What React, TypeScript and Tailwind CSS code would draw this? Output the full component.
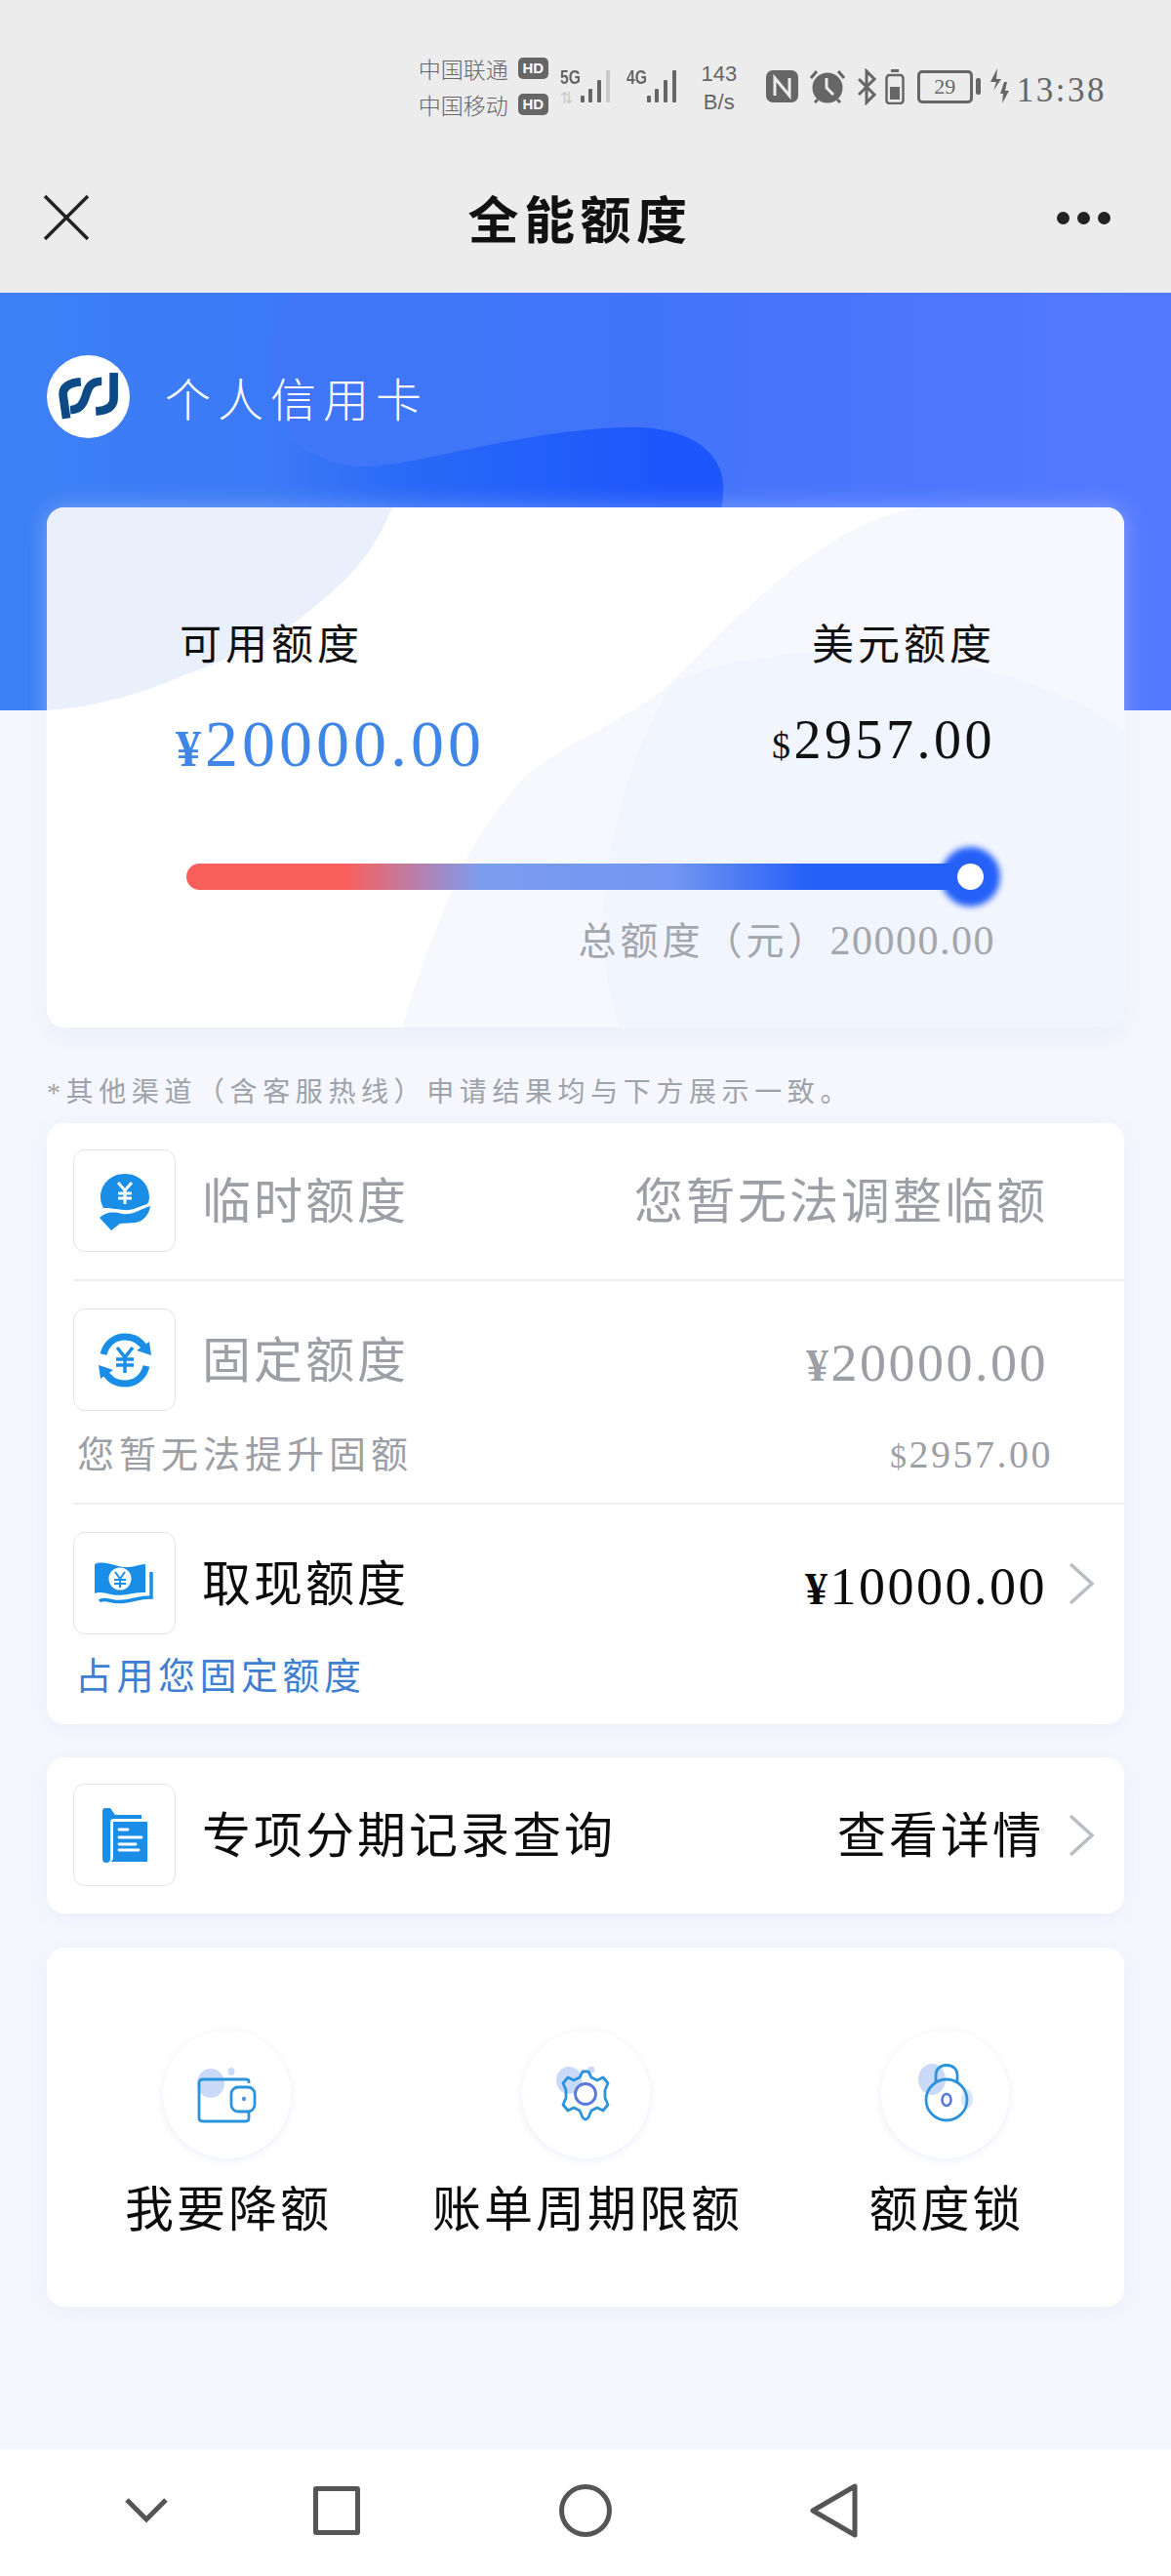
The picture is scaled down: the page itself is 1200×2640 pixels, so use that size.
import React from "react";

const serif = "font-['Liberation_Serif','Noto_Sans_CJK_SC',serif]";

function Chevron() {
  return (
    <svg width="28" height="46" viewBox="0 0 28 46" fill="none" stroke="#b9bdc4" strokeWidth="3.5">
      <path d="M3 3 L25 23 L3 43" />
    </svg>
  );
}

function IconBox({ children }: { children: React.ReactNode }) {
  return (
    <div className="w-[105px] h-[105px] shrink-0 rounded-[12px] border border-[#e3e4e7] bg-white flex items-center justify-center">
      {children}
    </div>
  );
}

function HandIcon() {
  return (
    <svg width="54" height="60" viewBox="0 0 54 60">
      <path d="M27 2 C42 2 52 13 52 26 C52 29 51 31 50 33 C42 35 35 40 26 39 C18 38 10 37 5 37 C3 33 2 30 2 26 C2 13 12 2 27 2 Z" fill="#1a8ee6" />
      <path d="M20 11 L27 19 L34 11 M27 19 V33 M20 22 H34 M20 27 H34" stroke="#fff" strokeWidth="3" fill="none" />
      <path d="M1 47 C6 42 14 40 24 43 C34 45 43 38 53 35 C52 43 47 50 38 52 L22 53 L13 60 Z" fill="#1a8ee6" />
    </svg>
  );
}

function CycleIcon() {
  return (
    <svg width="56" height="56" viewBox="0 0 56 56" fill="none">
      <path d="M6 22 C9 10 18 4 28 4 C38 4 45 9 49 17" stroke="#1a8ee6" strokeWidth="7" />
      <path d="M50 34 C47 46 38 52 28 52 C18 52 11 47 7 39" stroke="#1a8ee6" strokeWidth="7" />
      <path d="M40 18 L55 23 L53 9 Z M16 38 L1 33 L3 47 Z" fill="#1a8ee6" />
      <path d="M20 15 L28 25 L36 15 M28 25 V41 M19 27 H37 M19 33 H37" stroke="#1a8ee6" strokeWidth="3.5" />
    </svg>
  );
}

function MoneyIcon() {
  return (
    <svg width="64" height="46" viewBox="0 0 64 46">
      <path d="M1 3 C12 -2 24 7 36 6 C42 6 47 3 53 3 V32 C40 31 30 37 18 34 C10 32 5 31 1 33 Z" fill="#1a8ee6" />
      <circle cx="27" cy="18" r="11.5" fill="#fff" />
      <path d="M22 11 L27 18 L32 11 M27 18 V27 M21 19 H33 M21 23 H33" stroke="#1a8ee6" strokeWidth="2" fill="none" />
      <path d="M59 11 V37 C46 36 34 44 20 41 C14 40 9 38 6 41" stroke="#1a8ee6" strokeWidth="3.5" fill="none" />
    </svg>
  );
}

function FolderIcon() {
  return (
    <svg width="46" height="56" viewBox="0 0 46 56">
      <path d="M0 3 Q0 0 3 0 H8 L13 7 H40 V11 H12 Q8 11 8 15 V52 Q8 56 4 56 Q0 56 0 52 Z" fill="#1a8ee6" />
      <path d="M11 14 H46 V55 H8 Q11 54 11 50 Z" fill="#1a8ee6" />
      <path d="M17 22 H26 M17 30 H40 M17 37 H34 M17 43 H37" stroke="#fff" strokeWidth="2.8" strokeLinecap="round" />
    </svg>
  );
}

function WalletIcon() {
  return (
    <svg width="64" height="58" viewBox="0 0 64 58" fill="none" className="ml-[2px] mt-[2px]">
      <ellipse cx="15" cy="16" rx="14" ry="15" fill="#c9d9f8" />
      <ellipse cx="36" cy="4" rx="3.5" ry="4" fill="#c9d9f8" />
      <path d="M54 16 V14 Q54 12 51 12 H7 Q3 12 3 16 V52 Q3 55 7 55 H51 Q54 55 54 52 V46" stroke="#2b93dc" strokeWidth="2.8" />
      <rect x="36" y="20" width="24" height="25" rx="7" stroke="#2b93dc" strokeWidth="2.8" fill="#fff" />
      <circle cx="49" cy="32" r="2.2" fill="#5a8fdc" />
    </svg>
  );
}

function GearIcon() {
  return (
    <svg width="60" height="58" viewBox="0 0 60 58" fill="none">
      <ellipse cx="13" cy="14" rx="13" ry="14" fill="#c9d9f8" />
      <circle cx="36" cy="3" r="3.5" fill="#c9d9f8" />
      <path
        d="M27 5 H33 L36 11 L42 14 L48 11 L53 17 L50 24 V32 L53 39 L48 45 L42 42 L36 45 L33 52 Q30 56 27 52 L24 45 L18 42 L12 45 L7 39 L10 32 V24 L7 17 L12 11 L18 14 L24 11 Z"
        stroke="#2b93dc"
        strokeWidth="2.8"
        strokeLinejoin="round"
      />
      <circle cx="30" cy="28" r="10.5" stroke="#5a78d8" strokeWidth="2.8" />
    </svg>
  );
}

function LockIcon() {
  return (
    <svg width="58" height="60" viewBox="0 0 58 60" fill="none" className="ml-[4px] mb-[4px]">
      <ellipse cx="14" cy="16" rx="14" ry="16" fill="#c9d9f8" />
      <ellipse cx="50" cy="36" rx="6" ry="10" fill="#dbe6fb" />
      <path d="M18 20 V12 C18 5 23 1.5 29 1.5 C35 1.5 40 5 40 12 V20" stroke="#2b93dc" strokeWidth="2.8" />
      <circle cx="29" cy="37" r="21" stroke="#2b93dc" strokeWidth="2.8" />
      <ellipse cx="29" cy="37" rx="4.5" ry="6" stroke="#5a78d8" strokeWidth="2.6" />
    </svg>
  );
}

function Logo() {
  return (
    <div className="w-[85px] h-[85px] rounded-full bg-white shrink-0">
      <svg width="85" height="85" viewBox="0 0 254 254" fill="none" stroke="#0e4a86" strokeWidth="26">
        <path d="M60 194 L50 125 C46 97 70 84 104 82" />
        <path d="M168 80 C130 80 125 105 118 128 C110 152 100 166 72 168" />
        <path d="M205 54 L205 130 C205 158 185 170 150 172" />
      </svg>
    </div>
  );
}

function Signal({ dim }: { dim?: boolean }) {
  return (
    <svg width="36" height="36" viewBox="0 0 36 36" fill="#666">
      <rect x="1" y="28" width="4" height="7" rx="1" />
      <rect x="9" y="21" width="4" height="14" rx="1" />
      <rect x="18" y="12" width="4" height="23" rx="1" />
      <rect x="27" y="2" width="4" height="33" rx="1" fill={dim ? "#c9c9c9" : "#666"} />
    </svg>
  );
}

function StatusBar() {
  return (
    <div className="h-[160px] pt-[58px] pr-[66px] flex justify-end items-start text-[#666]">
      <div className="flex flex-col gap-[13px] mr-[12px] font-['Noto_Sans_CJK_SC',sans-serif] text-[23px] leading-[24px] font-light">
        {["中国联通", "中国移动"].map((name) => (
          <div key={name} className="flex items-center gap-[10px]">
            <span>{name}</span>
            <span className="w-[31px] h-[22px] rounded-[5px] bg-[#666] text-white text-[15px] leading-[22px] font-bold text-center font-['Liberation_Sans',sans-serif]">
              HD
            </span>
          </div>
        ))}
      </div>
      <div className="relative w-[56px] h-[50px] mt-[10px] mr-[12px]">
        <span className="absolute left-0 top-0 text-[21px] leading-[22px] font-bold font-['Liberation_Sans',sans-serif] scale-x-75 origin-left">5G</span>
        <div className="absolute right-0 top-[2px]"><Signal dim /></div>
        <span className="absolute left-0 top-[24px] text-[16px] leading-[16px] text-[#c9c9c9]">⇅</span>
      </div>
      <div className="relative w-[56px] h-[50px] mt-[10px] mr-[18px]">
        <span className="absolute left-0 top-0 text-[21px] leading-[22px] font-bold font-['Liberation_Sans',sans-serif] scale-x-75 origin-left">4G</span>
        <div className="absolute right-0 top-[2px]"><Signal /></div>
      </div>
      <div className="w-[42px] mr-[27px] mt-[3px] text-center font-['Liberation_Sans',sans-serif] text-[22px] leading-[29px] text-[#666]">
        143
        <br />
        B/s
      </div>
      <svg width="34" height="34" viewBox="0 0 34 34" className="mt-[14px] mr-[10px]">
        <rect width="33" height="33" rx="7" fill="#666" />
        <path d="M9 26 V8 L24 26 V8" stroke="#ececec" strokeWidth="3" fill="none" />
      </svg>
      <svg width="38" height="36" viewBox="0 0 38 36" className="mt-[13px] mr-[12px]">
        <circle cx="19" cy="19" r="15.5" fill="#666" />
        <path d="M18 9 V19 L25 26" stroke="#ececec" strokeWidth="3" fill="none" />
        <path d="M2 9 L8 2 M36 9 L30 2 M6 34 L9 31 M32 34 L29 31" stroke="#666" strokeWidth="3" />
      </svg>
      <svg width="20" height="38" viewBox="0 0 20 38" fill="none" stroke="#666" strokeWidth="3" className="mt-[12px] mr-[8px]">
        <path d="M1 11 L17 27 L9 35 V3 L17 11 L1 27" />
      </svg>
      <svg width="20" height="36" viewBox="0 0 20 36" className="mt-[13px] mr-[13px]" fill="none">
        <rect x="6" y="0" width="8" height="3" fill="#666" />
        <rect x="1.5" y="6" width="17" height="29" rx="3" stroke="#666" strokeWidth="2.5" />
        <rect x="5" y="18" width="10" height="13" fill="#666" />
      </svg>
      <div className="w-[57px] h-[34px] mt-[14px] rounded-[5px] border-[3px] border-[#666] text-center text-[22px] leading-[27px] font-['Liberation_Serif',serif]">
        29
      </div>
      <div className="w-[5px] h-[17px] bg-[#666] rounded-[2px] mt-[22px] ml-[3px] mr-[9px]" />
      <svg width="20" height="36" viewBox="0 0 20 36" fill="#666" className="mt-[12px] mr-[8px]">
        <path d="M8 0 L1 14 H7 L4 23 L12 11 H7 Z M15 14 L11 26 H14 L13 36 L20 23 H16 L18 14 Z" />
      </svg>
      <div className="mt-[15px] text-[35px] leading-[40px] tracking-[2.5px] font-['Liberation_Serif',serif]">13:38</div>
    </div>
  );
}

function NavBar() {
  return (
    <div className="h-[140px] pb-[14px] pl-[44px] pr-[62px] flex items-center justify-between">
      <svg width="48" height="48" viewBox="0 0 48 48" stroke="#222" strokeWidth="3.5">
        <path d="M2 2 L46 46 M46 2 L2 46" />
      </svg>
      <div className="font-['Noto_Sans_CJK_SC',sans-serif] font-bold text-[52px] tracking-[5.5px] leading-[60px] text-[#111] ml-[14px]">全能额度</div>
      <div className="flex gap-[8px]">
        <span className="w-[13px] h-[13px] rounded-full bg-[#222]" />
        <span className="w-[13px] h-[13px] rounded-full bg-[#222]" />
        <span className="w-[13px] h-[13px] rounded-full bg-[#222]" />
      </div>
    </div>
  );
}

function HeroDecor() {
  return (
    <svg className="absolute inset-0 w-full h-full" viewBox="0 0 1200 428" preserveAspectRatio="none">
      <defs>
        <linearGradient id="heroBg" x1="0" y1="0" x2="1" y2="0">
          <stop offset="0" stopColor="#3d80f5" />
          <stop offset="0.25" stopColor="#3b79f6" />
          <stop offset="0.55" stopColor="#4173fa" />
          <stop offset="1" stopColor="#5579fe" />
        </linearGradient>
        <linearGradient id="blob" gradientUnits="userSpaceOnUse" x1="280" y1="0" x2="680" y2="0">
          <stop offset="0" stopColor="#2b6cf6" stopOpacity="0" />
          <stop offset="0.35" stopColor="#2a69f7" />
          <stop offset="1" stopColor="#1d56fb" />
        </linearGradient>
        <linearGradient id="shape" gradientUnits="userSpaceOnUse" x1="270" y1="0" x2="800" y2="0">
          <stop offset="0" stopColor="#4076f7" />
          <stop offset="1" stopColor="#4173fa" stopOpacity="0" />
        </linearGradient>
      </defs>
      <rect width="1200" height="428" fill="url(#heroBg)" />
      <path d="M298 0 C280 30 272 60 275 90 C280 140 325 180 372 178 L800 178 L800 0 Z" fill="url(#shape)" />
      <path d="M372 178 C430 178 540 138 651 138 C700 138 745 160 741 205 C740 225 735 240 730 270 L260 270 L270 120 C290 150 330 178 372 178 Z" fill="url(#blob)" />
    </svg>
  );
}

function CardDecor() {
  return (
    <svg className="absolute inset-0 w-full h-full" viewBox="0 0 1104 533" preserveAspectRatio="none">
      <path d="M0 0 H354 C330 60 295 85 258 115 C225 140 185 155 143 171 C100 190 50 205 0 208 Z" fill="#e9f0fc" />
      <path d="M893 0 C790 20 710 110 641 179 C590 222 530 240 488 278 C450 320 425 365 411 401 C395 445 375 490 365 533 H1104 V0 Z" fill="#f6f8fe" />
      <path d="M641 179 C700 155 760 148 817 148 C920 148 1040 180 1104 230 V533 H587 C570 480 565 430 572 401 C578 320 605 240 641 179 Z" fill="#f1f5fd" />
    </svg>
  );
}

function CreditCard() {
  return (
    <div className="relative mx-[48px] mt-[-208px] h-[533px] rounded-[18px] bg-white overflow-hidden shadow-[0_0_24px_rgba(255,255,255,0.32),0_10px_24px_rgba(80,110,200,0.08)]">
      <CardDecor />
      <div className={`relative px-[132px] ${serif}`}>
        <div className="flex justify-between pt-[115px] pl-[4px]">
          <div>
            <div className="text-[43px] leading-[54px] tracking-[4px] text-[#111]">可用额度</div>
            <div className="mt-[38px] ml-[-4px] text-[68px] leading-[70px] tracking-[4px] text-[#3f86e6]">
              <span className="text-[52px] font-bold">¥</span>20000.00
            </div>
          </div>
          <div className="text-right">
            <div className="text-[43px] leading-[54px] tracking-[4px] text-[#111]">美元额度</div>
            <div className="mt-[34px] text-[56px] leading-[70px] tracking-[3.5px] text-[#111]">
              <span className="text-[38px]">$</span>2957.00
            </div>
          </div>
        </div>
        <div className="relative mt-[82px] ml-[11px] mr-[12px] h-[27px] rounded-full bg-[linear-gradient(90deg,#f9605c_0%,#f9605c_20%,#7c9cf0_37%,#7296f1_61%,#2560f7_78%)]">
          <div className="absolute right-[-17px] top-[-17px] w-[61px] h-[61px] rounded-full bg-[#2560f7] blur-[3px]" />
          <div className="absolute right-0 top-0 w-[27px] h-[27px] rounded-full bg-white" />
        </div>
        <div className="mt-[28px] text-right text-[39px] leading-[48px] tracking-[4px] text-[#a3a6ac]">
          总额度（元）<span className="text-[42px] tracking-[1.5px]">20000.00</span>
        </div>
      </div>
    </div>
  );
}

function Amount({ value, color }: { value: string; color: string }) {
  return (
    <div className={`mt-[9px] text-[54px] leading-[60px] tracking-[2.5px] ${color}`}>
      <span className="text-[46px] font-bold">¥</span>
      {value}
    </div>
  );
}

function QuotaCard() {
  return (
    <div className={`mx-[48px] mt-[11px] h-[616px] rounded-[18px] bg-white pl-[27px] shadow-[0_4px_22px_rgba(90,120,220,0.07)] ${serif}`}>
      <div className="flex items-center pt-[27px]">
        <IconBox><HandIcon /></IconBox>
        <div className="ml-[27px] pt-[2px] text-[50px] leading-[60px] tracking-[3px] text-[#9c9fa5]">临时额度</div>
        <div className="ml-auto mr-[78px] pt-[2px] text-[50px] leading-[60px] tracking-[3px] text-[#9c9fa5]">您暂无法调整临额</div>
      </div>
      <div className="mt-[28px] h-[2px] bg-[#eceef2]" />
      <div className="flex items-center pt-[28px]">
        <IconBox><CycleIcon /></IconBox>
        <div className="ml-[27px] pt-[2px] text-[50px] leading-[60px] tracking-[3px] text-[#9c9fa5]">固定额度</div>
        <div className="ml-auto mr-[78px]"><Amount value="20000.00" color="text-[#9c9fa5]" /></div>
      </div>
      <div className="flex justify-between pl-[4px] mt-[21px] text-[#9c9fa5]">
        <div className="text-[38px] leading-[48px] tracking-[5px]">您暂无法提升固额</div>
        <div className="mr-[73px] text-[40px] leading-[48px] tracking-[2.5px]">
          <span className="text-[34px]">$</span>2957.00
        </div>
      </div>
      <div className="mt-[23px] h-[2px] bg-[#eceef2]" />
      <div className="flex items-center pt-[28px]">
        <IconBox><MoneyIcon /></IconBox>
        <div className="ml-[27px] pt-[2px] text-[50px] leading-[60px] tracking-[3px] text-[#0c0c0c]">取现额度</div>
        <div className="ml-auto mr-[21px]"><Amount value="10000.00" color="text-[#0c0c0c]" /></div>
        <div className="mr-[30px]"><Chevron /></div>
      </div>
      <div className="pl-[2px] mt-[19px] text-[38px] leading-[48px] tracking-[4.5px] text-[#3f7fd2]">占用您固定额度</div>
    </div>
  );
}

function InstallmentCard() {
  return (
    <div className={`mx-[48px] mt-[34px] h-[160px] rounded-[18px] bg-white pl-[27px] pt-[27px] shadow-[0_4px_22px_rgba(90,120,220,0.07)] ${serif}`}>
      <div className="flex items-center">
        <IconBox><FolderIcon /></IconBox>
        <div className="ml-[27px] pt-[2px] text-[50px] leading-[60px] tracking-[3px] text-[#0c0c0c]">专项分期记录查询</div>
        <div className="ml-auto mr-[24px] pt-[2px] text-[50px] leading-[60px] tracking-[3px] text-[#0c0c0c]">查看详情</div>
        <div className="mr-[30px]"><Chevron /></div>
      </div>
    </div>
  );
}

const actions: { label: string; icon: React.ReactNode }[] = [
  { label: "我要降额", icon: <WalletIcon /> },
  { label: "账单周期限额", icon: <GearIcon /> },
  { label: "额度锁", icon: <LockIcon /> },
];

function ActionsCard() {
  return (
    <div className={`mx-[48px] mt-[35px] h-[368px] rounded-[18px] bg-white pt-[85px] grid grid-cols-[368px_368px_368px] shadow-[0_4px_22px_rgba(90,120,220,0.07)] ${serif}`}>
      {actions.map((a) => (
        <div key={a.label} className="flex flex-col items-center">
          <div className="w-[131px] h-[131px] rounded-full bg-white flex items-center justify-center shadow-[0_2px_10px_rgba(90,110,220,0.12)]">
            {a.icon}
          </div>
          <div className="mt-[23px] pl-[4px] text-[50px] leading-[60px] tracking-[3px] text-[#0c0c0c]">{a.label}</div>
        </div>
      ))}
    </div>
  );
}

function SystemNav() {
  return (
    <div className="mt-auto h-[130px] bg-white pb-[4px] pl-[127px] flex items-center">
      <svg width="46" height="28" viewBox="0 0 46 28" fill="none" stroke="#555" strokeWidth="5">
        <path d="M3 3 L23 23 L43 3" />
      </svg>
      <div className="w-[48px] h-[50px] rounded-[3px] border-[5px] border-[#555] ml-[148px]" />
      <div className="w-[54px] h-[54px] rounded-full border-[5px] border-[#555] ml-[204px]" />
      <svg width="50" height="56" viewBox="0 0 50 56" fill="none" stroke="#555" strokeWidth="5" strokeLinejoin="round" className="ml-[203px]">
        <path d="M46 3 V53 L3 28 Z" />
      </svg>
    </div>
  );
}

export default function App() {
  return (
    <div className="w-[1200px] h-[2640px] flex flex-col overflow-hidden bg-[#f5f7fd]">
      <div className="bg-[#ececec]">
        <StatusBar />
        <NavBar />
      </div>
      <div className="relative h-[428px] overflow-hidden shrink-0">
        <HeroDecor />
        <div className="relative flex items-center pt-[64px] pl-[48px]">
          <Logo />
          <div className="ml-[36px] font-['Noto_Sans_CJK_SC',sans-serif] font-light text-[47px] leading-[60px] tracking-[7px] text-white">个人信用卡</div>
        </div>
      </div>
      <CreditCard />
      <div className={`mt-[47px] pl-[48px] text-[28px] leading-[40px] tracking-[5.6px] text-[#9ea2a9] ${serif}`}>*其他渠道（含客服热线）申请结果均与下方展示一致。</div>
      <QuotaCard />
      <InstallmentCard />
      <ActionsCard />
      <SystemNav />
    </div>
  );
}
